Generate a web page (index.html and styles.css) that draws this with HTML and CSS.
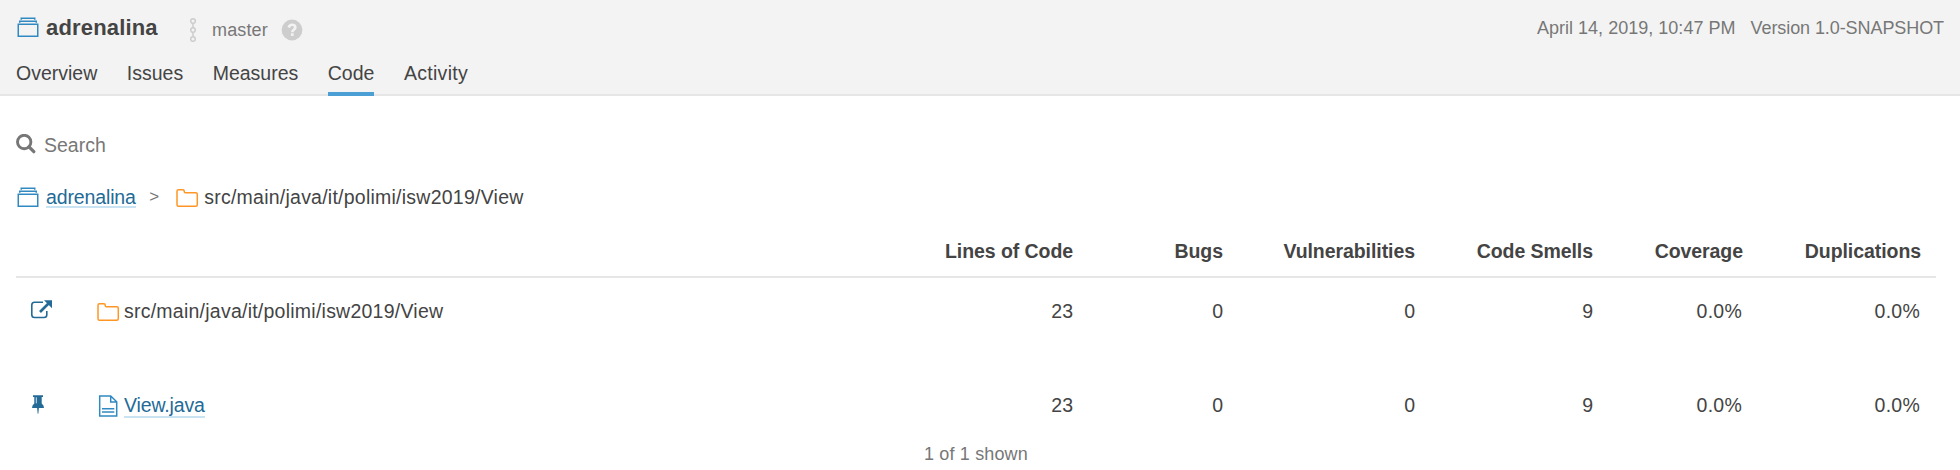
FILE: index.html
```html
<!DOCTYPE html>
<html lang="en">
<head>
<meta charset="utf-8">
<title>adrenalina - Code</title>
<link rel="stylesheet" href="styles.css">
</head>
<body>
<svg class="defs" aria-hidden="true">
  <symbol id="project" viewBox="0 0 16 16"><path d="M1.5 5.5h13v8h-13zM2.5 4.5v-1h11v1M3.5 2.5v-1h9v1" fill="none" stroke="#3089c1"/></symbol>
  <symbol id="folder" viewBox="0 0 24 24"><path d="M2 5.2Q2 3.7 3.5 3.7H8Q9.2 3.7 9.2 5V5.6Q9.2 6.8 10.4 6.8H20.8Q22.3 6.8 22.3 8.3V18.8Q22.3 20.3 20.8 20.3H3.5Q2 20.3 2 18.8Z" fill="none" stroke="#ff9626" stroke-width="1.5"/></symbol>
</svg>
<header class="header">
  <div class="top">
    <svg class="icon"><use href="#project"/></svg>
    <h1 class="title">adrenalina</h1>
    <svg class="branch" viewBox="0 0 8 26"><g fill="none" stroke="#cdcdcd" stroke-width="1.5"><circle cx="4" cy="4" r="2.3"/><circle cx="4" cy="13" r="2.3"/><circle cx="4" cy="22" r="2.3"/><path d="M4 6.3v4.4M4 15.3v4.4"/></g></svg>
    <span class="master">master</span>
    <svg class="help" viewBox="0 0 22 22"><circle cx="11" cy="11" r="10.4" fill="#cdcdcd"/><path d="M7.7 8.5C8.3 6.6 9.5 5.8 11 5.8c2 0 3.3 1.1 3.3 2.7 0 2.3-3 2.4-3 4.7" fill="none" stroke="#f3f3f3" stroke-width="2.6"/><path d="M9.9 14.3h2.8v2.6H9.9z" fill="#f3f3f3"/></svg>
    <div class="meta"><span class="date">April 14, 2019, 10:47 PM</span><span class="version">Version 1.0-SNAPSHOT</span></div>
  </div>
  <nav class="tabs">
    <a class="tab">Overview</a><a class="tab">Issues</a><a class="tab">Measures</a><a class="tab active">Code</a><a class="tab activity">Activity</a>
  </nav>
</header>
<main class="page">
  <div class="search">
    <svg class="magnifier" viewBox="0 0 20 20"><circle cx="8.2" cy="8" r="6.7" fill="none" stroke="#777" stroke-width="2.9"/><path d="M13 12.8l4.8 4.9" stroke="#777" stroke-width="3.2" stroke-linecap="round"/></svg>
    <span>Search</span>
  </div>
  <div class="crumbs">
    <svg class="icon"><use href="#project"/></svg>
    <a class="link crumb-link">adrenalina</a>
    <span class="sep">&gt;</span>
    <svg class="icon"><use href="#folder"/></svg>
    <span class="path">src/main/java/it/polimi/isw2019/View</span>
  </div>
  <div class="row head"><span></span><span></span><span>Lines of Code</span><span>Bugs</span><span>Vulnerabilities</span><span>Code Smells</span><span>Coverage</span><span>Duplications</span></div>
  <div class="row first">
    <svg class="action open" viewBox="0 0 24 24"><path d="M14 5.3H5.5Q2.8 5.3 2.8 8V17.8Q2.8 20.5 5.5 20.5H15Q17.8 20.5 17.8 17.8V14" fill="none" stroke="#236a97" stroke-width="1.6"/><path d="M11 15L19.5 6.5" stroke="#236a97" stroke-width="2.6"/><path d="M15 3.2H23v8z" fill="#236a97"/></svg>
    <div class="name"><svg class="icon"><use href="#folder"/></svg><span class="path">src/main/java/it/polimi/isw2019/View</span></div>
    <span>23</span><span>0</span><span>0</span><span>9</span><span class="percent">0.0%</span><span class="percent">0.0%</span>
  </div>
  <div class="row">
    <svg class="action" viewBox="0 0 24 24"><path d="M4 2.3h10v1.8H12.7v6.4Q15 12 15 15H9.9L9.3 20.7H8.7L8.1 15H3Q3 12 5.3 10.5V4.1H4z" fill="#236a97"/><path d="M7.3 4.3v6" stroke="#fff" stroke-width=".8"/></svg>
    <div class="name"><svg class="icon" viewBox="0 0 24 24"><path d="M3.7 3h11l6 5.8v14.2H3.7zM14.7 3v6h6M6 15.7h12.3M6 19h12.3" fill="none" stroke="#3089c1" stroke-width="1.5"/></svg><a class="link file-link">View.java</a></div>
    <span>23</span><span>0</span><span>0</span><span>9</span><span class="percent">0.0%</span><span class="percent">0.0%</span>
  </div>
  <footer class="shown">1 of 1 shown</footer>
</main>
</body>
</html>
```
FILE: styles.css
```css
* { box-sizing: border-box; }
body { margin: 0; background: #fff; color: #444; font: 19.5px/24px "Liberation Sans", Arial, sans-serif; }
svg { display: block; flex: none; }
.defs { position: absolute; width: 0; height: 0; }
.icon { width: 24px; height: 24px; }
.header { height: 96px; background: #f3f3f3; border-bottom: 2px solid #e6e6e6; }
.top { display: flex; align-items: flex-start; height: 58px; padding: 15px 16px 0; }
.top .icon { margin-top: 0.7px; }
.title { margin: 1px 0 0 6px; width: 112px; font-size: 22px; letter-spacing: 0.17px; }
.branch { width: 8px; height: 26px; margin: 2px 0 0 31px; }
.master { width: 56px; margin: 3px 0 0 15px; font-size: 18px; letter-spacing: 0.15px; color: #777; }
.help { width: 22px; height: 22px; margin: 4px 0 0 13px; }
.meta { display: flex; gap: 15px; margin: 1px 0 0 auto; font-size: 18px; color: #777; }
.date { letter-spacing: 0.02px; }
.version { letter-spacing: -0.08px; }
.tabs { display: flex; gap: 29.5px; padding-left: 16px; }
.tab { height: 38px; padding-top: 3px; }
.active { border-bottom: 4px solid #4b9fd5; }
.activity { letter-spacing: 0.3px; }
.page { height: 374px; padding: 0 24px 0 16px; overflow: hidden; }
.search { display: flex; padding-top: 37px; color: #777; }
.magnifier { width: 20px; height: 20px; margin: 1px 8px 0 0; }
.crumbs { display: flex; height: 24px; margin-top: 28px; }
.crumbs .icon { margin-top: 1px; }
.link { color: #236a97; border-bottom: 2px solid #cae3f2; }
.crumb-link { height: 23px; margin-left: 6px; letter-spacing: -0.13px; }
.sep { margin: 0 16px 0 13.5px; font-size: 17px; color: #777; }
.path { margin-left: 4px; letter-spacing: 0.24px; }
.crumbs .path { margin-left: 5px; }
.row { display: grid; grid-template-columns: 80px 1fr 200px 150px 192px 178px 150px 178px; height: 94px; padding-right: 15px; text-align: right; }
.head { height: 69px; padding-top: 30px; border-bottom: 2px solid #e6e6e6; font-weight: 700; letter-spacing: -0.07px; }
.first { margin-top: 21px; }
.first .icon { margin-top: 1px; }
.action { width: 24px; height: 24px; margin-left: 13px; }
.open { margin-top: -2px; }
.name { display: flex; }
.percent { padding-right: 1px; letter-spacing: 0.25px; }
.file-link { height: 25px; margin-left: 4px; letter-spacing: -0.15px; }
.shown { margin-top: -45px; text-align: center; font-size: 18px; letter-spacing: 0.15px; color: #777; }
```
